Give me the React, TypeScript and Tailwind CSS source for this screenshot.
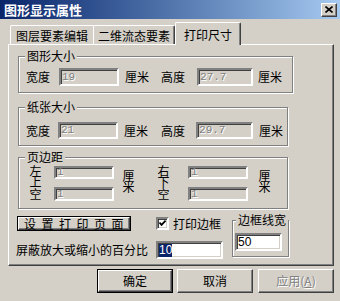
import React from "react";

const etched =
  "relative border border-[#808080] shadow-[inset_1px_1px_0_#fff,1px_1px_0_#fff]";
const sunken =
  "border-2 border-t-[#808080] border-l-[#808080] border-r-white border-b-white shadow-[inset_1px_1px_0_#404040,inset_-1px_-1px_0_#d4d0c8]";
const raised =
  "border border-t-white border-l-white border-r-[#404040] border-b-[#404040] shadow-[inset_-1px_-1px_0_#808080]";

function GroupLabel({ text, left = 6 }: { text: string; left?: number }) {
  return (
    <span
      className={`absolute -top-[7px] ${left === 6 ? "left-[6px]" : "left-[3px]"} px-[2px] bg-[#d4d0c8] leading-[12px] whitespace-nowrap`}
    >
      {text}
    </span>
  );
}

function DisabledField({ value, className }: { value: string; className: string }) {
  return (
    <div
      className={`${sunken} bg-[#d4d0c8] flex items-center pl-[1px] font-['Liberation_Mono',monospace] text-[11px] leading-[11px] text-[#808080] [text-shadow:1px_1px_0_#fff] ${className}`}
    >
      {value}
    </div>
  );
}

function Vert({ text }: { text: string }) {
  return (
    <div className="[writing-mode:vertical-rl] text-[12px] leading-[12px] tracking-[-0.5px] w-[12px]">
      {text}
    </div>
  );
}

export default function App() {
  return (
    <div className="w-[340px] h-[301px] bg-[#d4d0c8] overflow-hidden font-['Noto_Sans_CJK_SC',sans-serif] text-[12px] leading-[12px] text-black">
      {/* Title bar */}
      <div className="h-[19px] flex items-center justify-between pl-[4px] pr-[3px] bg-linear-to-r from-[#0a246a] to-[#a6caf0]">
        <span className="text-white font-bold text-[13px] leading-[13px]">图形显示属性</span>
        <div className={`${raised} bg-[#d4d0c8] w-[16px] h-[14px] flex items-center justify-center`}>
          <svg width="8" height="7" viewBox="0 0 8 7">
            <path d="M0.5 0.5 L7.5 6.5 M7.5 0.5 L0.5 6.5" stroke="#000" strokeWidth="1.6" />
          </svg>
        </div>
      </div>

      {/* Tabs */}
      <div className="mt-[3px] h-[22px] pl-[10px] flex items-end">
        <div className="w-[83px] h-[19px] border-t border-l border-t-white border-l-white rounded-tl-[2px] flex items-center justify-center pt-[1px]">
          图层要素编辑
        </div>
        <div className="w-[82px] h-[19px] border-t border-l border-r border-t-white border-l-white border-r-[#404040] rounded-t-[2px] shadow-[inset_-1px_0_0_#808080] flex items-center justify-center pt-[1px]">
          二维流态要素
        </div>
        <div className="relative z-10 -mb-[1px] w-[66px] h-[23px] bg-[#d4d0c8] border-t border-l border-r border-t-white border-l-white border-r-[#404040] rounded-t-[2px] shadow-[inset_-1px_0_0_#808080] flex justify-center pt-[6px]">
          打印尺寸
        </div>
      </div>

      {/* Panel */}
      <div className="ml-[8px] w-[326px] h-[222px] border border-t-white border-l-white border-r-[#404040] border-b-[#404040] shadow-[inset_-1px_-1px_0_#808080] flex flex-col">
        {/* 图形大小 */}
        <div className={`${etched} ml-[9px] mt-[11px] w-[275px] h-[37px] pt-[11px] pl-[7px]`}>
          <GroupLabel text="图形大小" />
          <div className="flex items-center h-[18px]">
            <span>宽度</span>
            <DisabledField value="19" className="ml-[9px] w-[60px] h-[18px]" />
            <span className="ml-[6px]">厘米</span>
            <span className="ml-[12px]">高度</span>
            <DisabledField value="27.7" className="ml-[12px] w-[56px] h-[18px]" />
            <span className="ml-[5px]">厘米</span>
          </div>
        </div>

        {/* 纸张大小 */}
        <div className={`${etched} ml-[9px] mt-[14px] w-[270px] h-[39px] pt-[14px] pl-[7px]`}>
          <GroupLabel text="纸张大小" />
          <div className="flex items-center h-[17px]">
            <span>宽度</span>
            <DisabledField value="21" className="ml-[8px] w-[60px] h-[17px]" />
            <span className="ml-[6px]">厘米</span>
            <span className="ml-[13px]">高度</span>
            <DisabledField value="29.7" className="ml-[11px] w-[57px] h-[17px]" />
            <span className="ml-[6px]">厘米</span>
          </div>
        </div>

        {/* 页边距 */}
        <div className={`${etched} ml-[9px] mt-[11px] w-[270px] h-[52px] pt-[7px] pl-[10px]`}>
          <GroupLabel text="页边距" />
          <div className="flex items-start">
            <Vert text="左上空" />
            <div className="ml-[13px] flex flex-col gap-[8px] pt-[1px]">
              <DisabledField value="1" className="w-[60px] h-[13px]" />
              <DisabledField value="1" className="w-[60px] h-[14px]" />
            </div>
            <div className="ml-[8px] mt-[5px]">
              <Vert text="厘米" />
            </div>
            <div className="ml-[23px]">
              <Vert text="右下空" />
            </div>
            <div className="ml-[19px] flex flex-col gap-[8px] pt-[1px]">
              <DisabledField value="1" className="w-[60px] h-[13px]" />
              <DisabledField value="1" className="w-[60px] h-[14px]" />
            </div>
            <div className="ml-[10px] mt-[5px]">
              <Vert text="厘米" />
            </div>
          </div>
        </div>

        {/* bottom area */}
        <div className="flex items-start">
          <div className="w-[223px] pl-[7px]">
            <div className="mt-[7px] flex items-center h-[15px]">
              <div className="ml-[1px] w-[114px] h-[15px] border border-black">
                <div className={`${raised} w-full h-full flex items-center justify-center whitespace-nowrap tracking-[5.5px] pl-[5px]`}>
                  设置打印页面
                </div>
              </div>
              <div className={`${sunken} ml-[25px] w-[13px] h-[13px] bg-white flex items-center justify-center`}>
                <svg width="9" height="9" viewBox="0 0 9 9">
                  <path d="M1.5 3.5 L3.5 5.8 L7.6 1.6" fill="none" stroke="#000" strokeWidth="1.8" />
                </svg>
              </div>
              <span className="ml-[4px]">打印边框</span>
            </div>
            <div className="mt-[10px] flex items-center h-[18px]">
              <span>屏蔽放大或缩小的百分比</span>
              <div className={`${sunken} ml-[8px] w-[67px] h-[18px] bg-white flex items-center pl-[1px]`}>
                <span className="bg-[#0a246a] text-white font-['Liberation_Sans',sans-serif] text-[12px] leading-[13px]">
                  10
                </span>
              </div>
            </div>
          </div>
          <div className={`${etched} mt-[11px] w-[57px] h-[37px] pt-[12px] pl-[2px]`}>
            <GroupLabel text="边框线宽" left={3} />
            <div className={`${sunken} w-[47px] h-[18px] bg-white flex items-center pl-[1px] font-['Liberation_Sans',sans-serif] text-[12px]`}>
              50
            </div>
          </div>
        </div>
      </div>

      {/* Buttons */}
      <div className="mt-[3px] pl-[97px] flex">
        <div className="w-[76px] h-[24px] border border-black">
          <div className={`${raised} w-full h-full flex items-center justify-center`}>确定</div>
        </div>
        <div className={`${raised} ml-[4px] w-[76px] h-[24px] flex items-center justify-center`}>取消</div>
        <div
          className={`${raised} ml-[5px] w-[76px] h-[24px] flex items-center justify-center text-[#808080] [text-shadow:1px_1px_0_#fff]`}
        >
          应用(<span className="underline">A</span>)
        </div>
      </div>
    </div>
  );
}
